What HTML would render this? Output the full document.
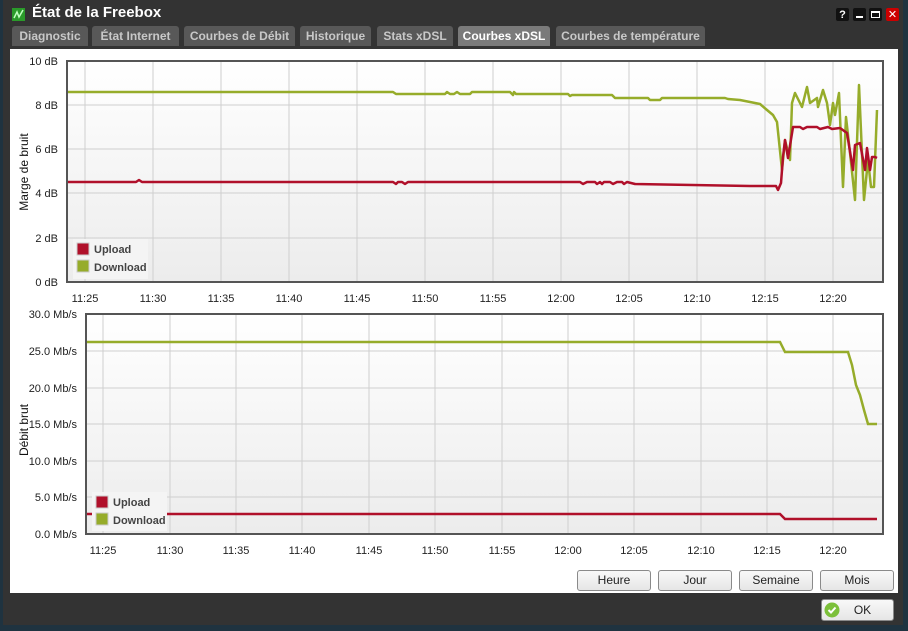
<!DOCTYPE html>
<html><head><meta charset="utf-8"><style>
*{margin:0;padding:0;box-sizing:border-box}
body{width:908px;height:631px;background:#333;font-family:"Liberation Sans","DejaVu Sans",sans-serif;position:relative;overflow:hidden}
.edge{position:absolute;background:#1f3340}
.title{position:absolute;left:32px;top:4px;color:#fff;font-weight:bold;font-size:15px}
.tab{position:absolute;top:26px;height:20px;background:#585858;color:#c8c8c8;font-weight:bold;font-size:12px;line-height:20px;text-align:center;border-radius:3px 3px 0 0}
.tab.a{background:#7a7a7a;color:#fff}
.panel{position:absolute;left:10px;top:49px;width:888px;height:544px;background:#fff}
.btn{position:absolute;top:570px;height:21px;width:74px;border:1px solid #8a8a8a;border-radius:3px;background:linear-gradient(#f8f8f8,#e6e6e6);font-size:12px;text-align:center;line-height:19px;color:#222}
.wb{position:absolute;top:7px;width:15px;height:15px;border-radius:3px;background:#111;color:#fff;font-size:11px;font-weight:bold;text-align:center;line-height:15px;border:1px solid #333}
</style></head><body>
<div class="edge" style="left:0;top:0;width:3px;height:631px"></div>
<div class="edge" style="left:0;top:625px;width:908px;height:6px"></div>
<div class="edge" style="left:903px;top:0;width:5px;height:631px"></div>
<svg style="position:absolute;left:12px;top:8px" width="13" height="13"><rect width="13" height="13" fill="#2a9a2a"/><path d="M2 10 L5 4 L7 9 L11 2" stroke="#bfffbf" stroke-width="1.5" fill="none"/></svg>
<div class="title">État de la Freebox</div>
<div class="wb" style="left:835px">?</div>
<div class="wb" style="left:852px"><div style="position:absolute;left:3px;top:8px;width:7px;height:2px;background:#fff"></div></div>
<div class="wb" style="left:868px"><div style="position:absolute;left:2px;top:3px;width:9px;height:7px;border:1.5px solid #fff;border-top-width:2px"></div></div>
<div class="wb" style="left:885px;background:#c00">✕</div>
<div class="tab" style="left:12px;width:76px">Diagnostic</div>
<div class="tab" style="left:92px;width:87px">État Internet</div>
<div class="tab" style="left:184px;width:111px">Courbes de Débit</div>
<div class="tab" style="left:300px;width:71px">Historique</div>
<div class="tab" style="left:377px;width:76px">Stats xDSL</div>
<div class="tab a" style="left:458px;width:92px">Courbes xDSL</div>
<div class="tab" style="left:556px;width:149px">Courbes de température</div>
<div class="panel"></div>
<svg style="position:absolute;left:0;top:0" width="908" height="631" font-family="Liberation Sans, sans-serif" font-size="11">
<defs><linearGradient id="g" x1="0" y1="0" x2="0" y2="1"><stop offset="0" stop-color="#fff"/><stop offset="1" stop-color="#ececec"/></linearGradient></defs>
<rect x="67" y="61" width="816" height="221" fill="url(#g)"/>
<g stroke="#cfcfcf" stroke-width="1">
<path d="M67 105H883M67 149H883M67 193H883M67 238H883"/>
<path d="M85 61V282M153 61V282M221 61V282M289 61V282M357 61V282M425 61V282M493 61V282M561 61V282M629 61V282M697 61V282M765 61V282M833 61V282"/>
</g>
<g fill="#222" text-anchor="end"><text x="58" y="65">10 dB</text><text x="58" y="109">8 dB</text><text x="58" y="153">6 dB</text><text x="58" y="197">4 dB</text><text x="58" y="242">2 dB</text><text x="58" y="286">0 dB</text></g>
<g fill="#222" text-anchor="middle"><text x="85" y="302">11:25</text><text x="153" y="302">11:30</text><text x="221" y="302">11:35</text><text x="289" y="302">11:40</text><text x="357" y="302">11:45</text><text x="425" y="302">11:50</text><text x="493" y="302">11:55</text><text x="561" y="302">12:00</text><text x="629" y="302">12:05</text><text x="697" y="302">12:10</text><text x="765" y="302">12:15</text><text x="833" y="302">12:20</text></g>
<text transform="translate(28 172) rotate(-90)" text-anchor="middle" font-size="12" fill="#111">Marge de bruit</text>
<polyline fill="none" stroke="#96ac2a" stroke-width="2.5" stroke-linejoin="round" points="67,92 393,92 396,94 445,94 447,92 450,94 454,94 457,92 460,94 470,94 472,92 510,92 513,95 514,92 516,94 568,94 570,96 572,95 612,95 615,98 648,98 650,100 660,100 662,98 725,98 728,99 740,100 750,102 760,104 767,110 773,115 777,122 782,170 785,140 790,160 792,103 795,93 802,107 807,87 810,103 817,98 818,107 823,90 827,103 830,125 833,103 835,115 839,93 843,187 846,117 850,153 855,200 859,85 864,200 868,160 871,187 874,187 877,110"/>
<polyline fill="none" stroke="#b0102a" stroke-width="2.5" stroke-linejoin="round" points="67,182 136,182 139,180 142,182 393,182 396,184 398,182 402,182 405,184 408,182 580,182 583,184 587,182 595,182 597,184 600,182 602,184 604,182 610,182 613,184 617,182 622,182 624,184 627,182 635,184 750,186 776,186 778,190 781,183 783,157 785,140 788,158 793,127 800,127 803,129 807,127 817,127 820,129 828,127 832,129 840,128 847,133 853,170 855,145 860,143 865,170 867,148 870,170 872,157 875,157 877,158"/>
<rect x="67" y="61" width="816" height="221" fill="none" stroke="#555" stroke-width="2"/>
<rect x="73" y="239" width="75" height="40" fill="#f4f4f4"/>
<rect x="77" y="243" width="12" height="12" fill="#b0102a" stroke="#ccc"/><rect x="77" y="260" width="12" height="12" fill="#96ac2a" stroke="#ccc"/>
<g font-weight="bold" fill="#444"><text x="94" y="253">Upload</text><text x="94" y="271">Download</text></g>
<rect x="86" y="314" width="797" height="220" fill="url(#g)"/>
<g stroke="#cfcfcf" stroke-width="1">
<path d="M86 351H883M86 388H883M86 424H883M86 461H883M86 497H883"/>
<path d="M103 314V534M170 314V534M236 314V534M302 314V534M369 314V534M435 314V534M502 314V534M568 314V534M634 314V534M701 314V534M767 314V534M833 314V534"/>
</g>
<g fill="#222" text-anchor="end"><text x="77" y="318">30.0 Mb/s</text><text x="77" y="355">25.0 Mb/s</text><text x="77" y="392">20.0 Mb/s</text><text x="77" y="428">15.0 Mb/s</text><text x="77" y="465">10.0 Mb/s</text><text x="77" y="501">5.0 Mb/s</text><text x="77" y="538">0.0 Mb/s</text></g>
<g fill="#222" text-anchor="middle"><text x="103" y="554">11:25</text><text x="170" y="554">11:30</text><text x="236" y="554">11:35</text><text x="302" y="554">11:40</text><text x="369" y="554">11:45</text><text x="435" y="554">11:50</text><text x="502" y="554">11:55</text><text x="568" y="554">12:00</text><text x="634" y="554">12:05</text><text x="701" y="554">12:10</text><text x="767" y="554">12:15</text><text x="833" y="554">12:20</text></g>
<text transform="translate(28 430) rotate(-90)" text-anchor="middle" font-size="12" fill="#111">Débit brut</text>
<polyline fill="none" stroke="#96ac2a" stroke-width="2.5" points="86,342 780,342 785,352 848,352 852,365 856,385 860,395 864,410 868,424 877,424"/>
<polyline fill="none" stroke="#b0102a" stroke-width="2.5" points="86,514 780,514 785,519 877,519"/>
<rect x="86" y="314" width="797" height="220" fill="none" stroke="#555" stroke-width="2"/>
<rect x="92" y="492" width="75" height="39" fill="#f4f4f4"/>
<rect x="96" y="496" width="12" height="12" fill="#b0102a" stroke="#ccc"/><rect x="96" y="513" width="12" height="12" fill="#96ac2a" stroke="#ccc"/>
<g font-weight="bold" fill="#444"><text x="113" y="506">Upload</text><text x="113" y="524">Download</text></g>
</svg>
<div class="btn" style="left:577px">Heure</div>
<div class="btn" style="left:658px">Jour</div>
<div class="btn" style="left:739px">Semaine</div>
<div class="btn" style="left:820px">Mois</div>
<div class="btn" style="left:821px;top:599px;width:73px;height:22px;line-height:20px;padding-left:10px">OK
<svg style="position:absolute;left:2px;top:2px" width="16" height="16"><circle cx="8" cy="8" r="7.5" fill="#7cc03a"/><path d="M4.5 8 L7 10.5 L11.5 5.5" stroke="#fff" stroke-width="2" fill="none"/></svg></div>
</body></html>
